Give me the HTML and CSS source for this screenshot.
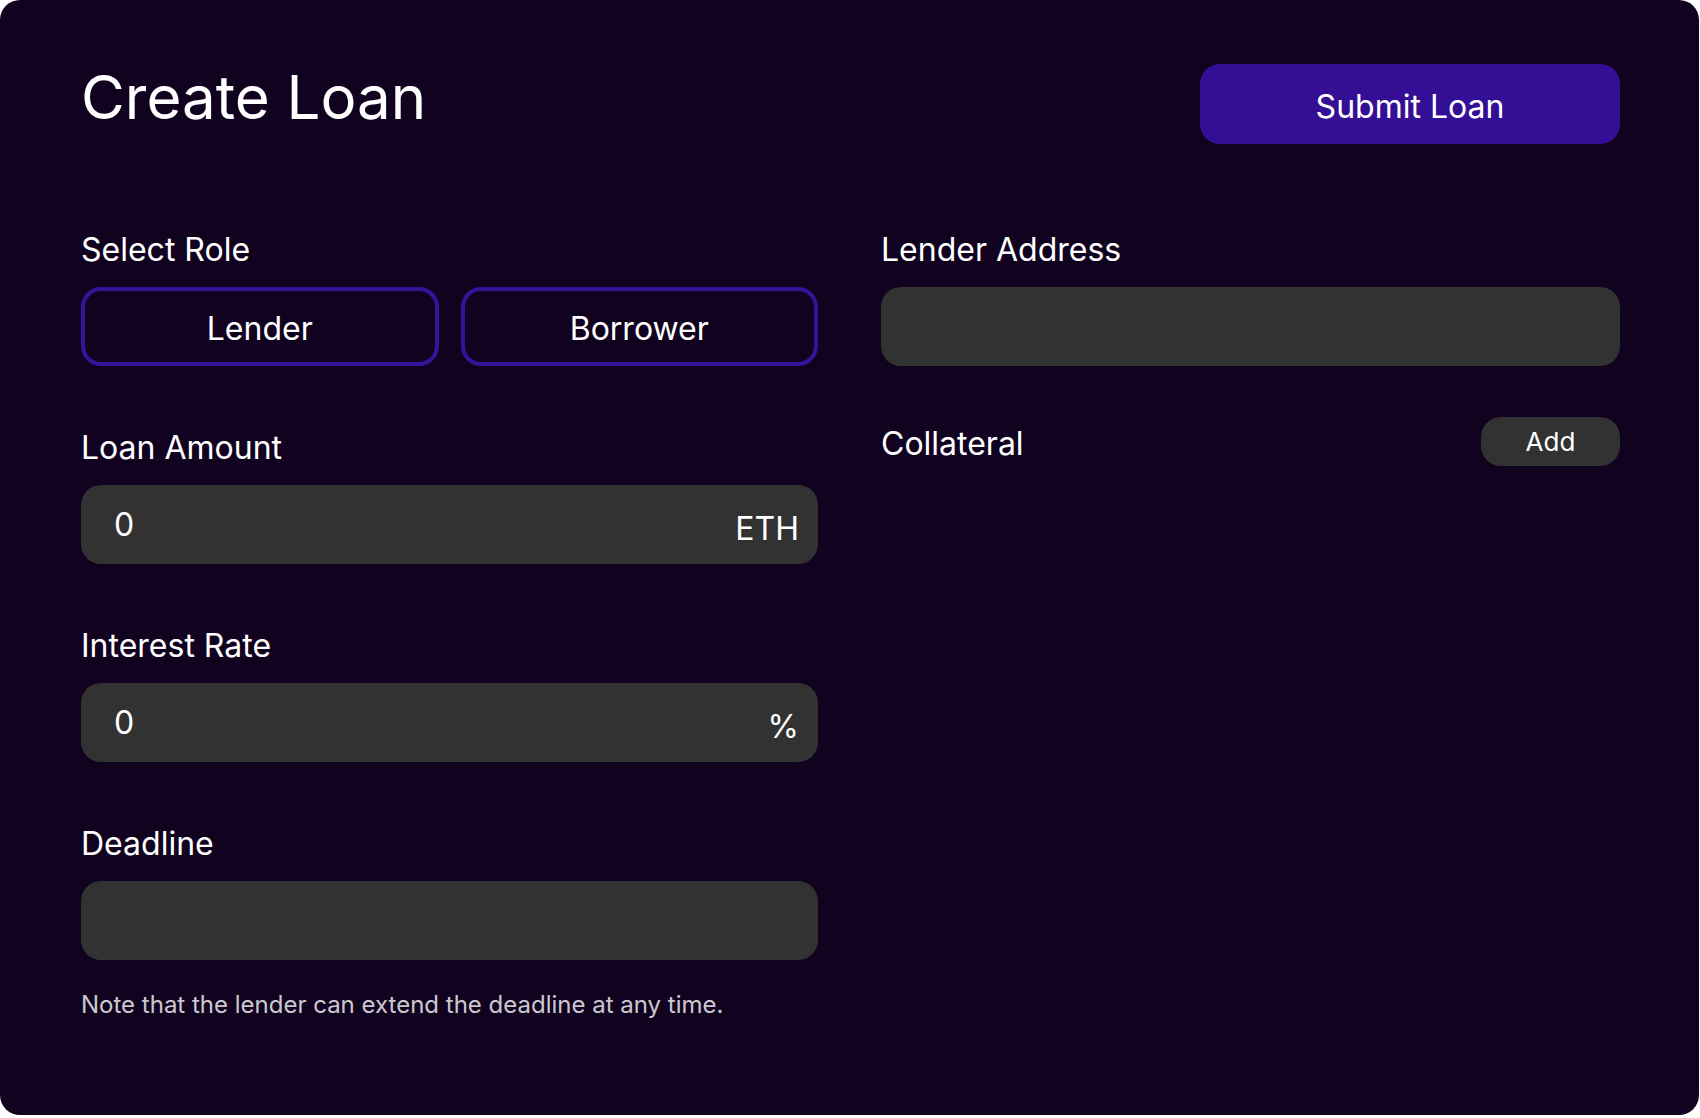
FILE: index.html
```html
<!DOCTYPE html>
<html lang="en">
<head>
<meta charset="utf-8">
<title>Create Loan</title>
<link rel="stylesheet" href="styles.css">
</head>
<body>
<div class="panel">
  <header class="header">
    <h1 class="title">Create Loan</h1>
    <button class="submit">Submit Loan</button>
  </header>
  <main class="grid">
    <section class="col">
      <div class="field">
        <div class="label">Select Role</div>
        <div class="roles">
          <button class="role">Lender</button>
          <button class="role">Borrower</button>
        </div>
      </div>
      <div class="field">
        <div class="label">Loan Amount</div>
        <div class="input"><span class="value">0</span><span class="suffix">ETH</span></div>
      </div>
      <div class="field">
        <div class="label">Interest Rate</div>
        <div class="input"><span class="value">0</span><span class="suffix">%</span></div>
      </div>
      <div class="field field-last">
        <div class="label">Deadline</div>
        <div class="input"></div>
      </div>
      <p class="note">Note that the lender can extend the deadline at any time.</p>
    </section>
    <section class="col">
      <div class="field field-addr">
        <div class="label">Lender Address</div>
        <div class="input"></div>
      </div>
      <div class="collateral">
        <div class="label">Collateral</div>
        <button class="add">Add</button>
      </div>
    </section>
  </main>
</div>
</body>
</html>
```
FILE: styles.css
```css
* { box-sizing: border-box; }
html, body { margin: 0; padding: 0; background: #ffffff; }
body { font-family: Inter, "Noto Sans", sans-serif; color: #ffffff; }

.panel {
  width: 1699px;
  height: 1115px;
  background: #11031f;
  border-radius: 20px;
  padding: 64px 79px 0 81px;
}

.header {
  display: flex;
  justify-content: space-between;
  align-items: flex-start;
}

.title {
  margin: 3px 0 0 0;
  font-size: 60px;
  line-height: 60px;
  font-weight: 400;
}

.submit {
  width: 420px;
  height: 80px;
  border: none;
  border-radius: 20px;
  background: #340f96;
  color: #fff;
  font-family: inherit;
  font-size: 32px;
  font-weight: 400;
  padding: 5px 0 0 0;
}

.grid {
  margin-top: 86px;
  display: grid;
  grid-template-columns: 737px 1fr;
  column-gap: 63px;
}

.col { display: flex; flex-direction: column; }

.field { display: flex; flex-direction: column; gap: 17px; margin-bottom: 62px; }
.field-last { margin-bottom: 0; }
.field-addr { margin-bottom: 51px; }

.label {
  font-size: 32px;
  line-height: 40px;
  font-weight: 400;
}

.roles {
  display: grid;
  grid-template-columns: 1fr 1fr;
  gap: 22px;
}

.role {
  height: 79px;
  border: 4px solid #35129a;
  border-radius: 20px;
  background: transparent;
  color: #fff;
  font-family: inherit;
  font-size: 32px;
  padding: 4px 0 0 0;
}

.input {
  height: 79px;
  background: #323232;
  border-radius: 20px;
  display: flex;
  align-items: center;
  justify-content: space-between;
  padding: 0 19px 0 33px;
  font-size: 32px;
}

.suffix { margin-top: 8px; }

.note {
  margin: 29px 0 0 0;
  font-size: 24px;
  line-height: 32px;
  color: rgba(255, 255, 255, 0.8);
}

.collateral {
  display: flex;
  justify-content: space-between;
  align-items: center;
}

.collateral .label { margin-top: 4px; }

.add {
  width: 139px;
  height: 49px;
  border: none;
  border-radius: 20px;
  background: #323232;
  color: #fff;
  font-family: inherit;
  font-size: 26px;
  padding: 0;
}
```
